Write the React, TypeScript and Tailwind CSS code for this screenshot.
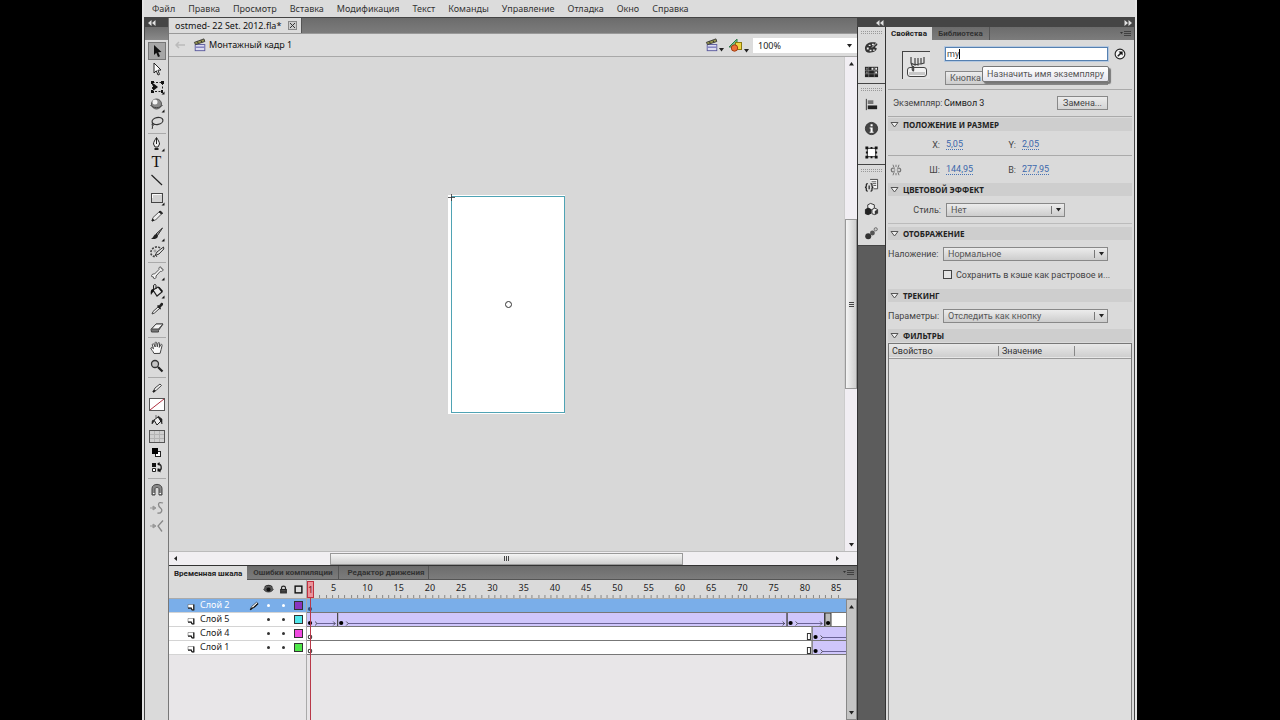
import { useState } from "react";
import type { ReactNode } from "react";
import clsx from "clsx";

const MENU = [
  "Файл",
  "Правка",
  "Просмотр",
  "Вставка",
  "Модификация",
  "Текст",
  "Команды",
  "Управление",
  "Отладка",
  "Окно",
  "Справка",
];

/* ---------- icons ---------- */

function Icon({ children, size = "size-4" }: { children: ReactNode; size?: string }) {
  return (
    <svg viewBox="0 0 16 16" className={clsx("block shrink-0", size)} fill="none" stroke="#222" aria-hidden="true">
      {children}
    </svg>
  );
}

// Small corner mark: the tool has a flyout menu.
const more = <path d="M15.5 12.5v3h-3z" fill="#111" stroke="none" />;

const ICONS: Record<string, ReactNode> = {
  arrow: <path d="M5 2v10l2.3-2.2L9 14l2-.8-1.8-4L12.500 9z" fill="#111" stroke="none" />,
  subselect: <path d="M5 2v10l2.300-2.200L9 14l1.500-.6-1.600-4.200L12 9z" fill="#fff" strokeWidth="1" />,
  transform: (
    <>
      <rect x="3.5" y="3.500" width="10" height="9" strokeDasharray="2 1.500" />
      <path d="M2 2h3v3H2zM12 2h3v3h-3zM2 11h3v3H2zM12 11h2v3h-2zM4 4v8l5-4z" fill="#111" stroke="none" />
      {more}
    </>
  ),
  sphere: (
    <>
      <circle cx="7.500" cy="7" r="5" fill="#8a8a8a" stroke="#555" />
      <circle cx="6" cy="5" r="2.500" fill="#f4f4f4" stroke="none" />
      <path d="M1.500 8c2 3.500 10 3.500 12 0" stroke="#444" />
      {more}
    </>
  ),
  lasso: (
    <>
      <ellipse cx="8.500" cy="6" rx="5.500" ry="3.500" transform="rotate(-12 8.500 6)" stroke="#333" strokeWidth="1.200" />
      <path d="M4 8c-2 1-.5 3 1 2S4 8 3.500 9.500 4 13 3 14" stroke="#333" />
    </>
  ),
  pen: (
    <>
      <path d="M7.500 1.500C6 4 4.500 6 4.500 8l1.500 3h3l1.500-3c0-2-1.500-4-3-6.500z" fill="#f2f2f2" />
      <path d="M7.500 2v6" />
      <path d="M5.500 12h4v2h-4z" fill="#222" stroke="none" />
      {more}
    </>
  ),
  line: <path d="M2.500 3 13 13" strokeWidth="1.200" />,
  rect: (
    <>
      <rect x="2.500" y="3.500" width="11" height="9" fill="#d2d2d2" stroke="#444" />
      <path d="M3.500 8V4.500h9" stroke="#fafafa" />
      {more}
    </>
  ),
  pencil: (
    <>
      <path d="m3 13 1-3.500L11 3l2.500 2L6.500 12z" fill="#eee" stroke="#555" />
      <path d="m3 13 .6-2 1.400 1.300zM10 4l1-1 2.500 2-1 1z" fill="#222" />
    </>
  ),
  brush: (
    <>
      <path d="M13.500 2 7 8l1.500 1.500z" fill="#999" stroke="#333" />
      <path d="M7.500 8C5 8 5 11 2 13c4 .5 7-.5 7-3.500z" fill="#222" stroke="none" />
      {more}
    </>
  ),
  deco: (
    <>
      <path d="M11 4c-3-2.500-8-.5-9 3.500s3 6 6 4.500" strokeDasharray="2 1.300" strokeWidth="1.600" stroke="#444" />
      <path d="M14.500 3 8 8l-2 3.500L10 10l4.800-5z" fill="#e4e4e4" stroke="#333" />
      <circle cx="6" cy="7" r="1" fill="#fff" stroke="#555" strokeWidth=".6" />
    </>
  ),
  bone: (
    <>
      <path
        d="M5.500 9 10 4.500c-.6-2 .8-3 2-2.400l.3 1.600 1.700.4c.4 1.600-1 2.700-2.700 2.200L7 11c.5 2-.8 3-2.200 2.500l-.5-1.600-1.600-.3C2 10 3.700 8.500 5.500 9z"
        fill="#f6f6f6"
        stroke="#555"
      />
      {more}
    </>
  ),
  bucket: (
    <>
      <path d="m4 7 5-3 4 5-5 4z" fill="#e6e6e6" strokeWidth="1.200" />
      <path d="M7 6V2.500C7 1 4.500 1 4.500 3v4" />
      <path d="M4.500 6C1.500 6 1.500 9 2 12c1-2 2-3 3-3.500zM9 4l4 5 1-1-3.500-4z" fill="#111" stroke="none" />
      {more}
    </>
  ),
  dropper: (
    <>
      <path d="m3 13 1-2.500 5-4.500 1.500 1.500-5 4.500z" fill="#eee" stroke="#444" />
      <path d="M8 5l1-1 1 .5 2-2.500c1.500-.5 2.500.5 2 2L11.500 6.500 12 8l-1 .5z" fill="#222" stroke="none" />
    </>
  ),
  eraser: (
    <>
      <path d="M2 10.500 7 5h7l-4.500 6.500v1.500H2.500z" fill="#777" stroke="#444" />
      <path d="M2.500 10 7 5h7L9.500 10z" fill="#f4f4f4" stroke="#444" />
    </>
  ),
  hand: (
    <path
      d="M5 13.500C4 11 2 9.500 1.800 8c.6-.9 1.700-.3 2.700.8L3.300 4.500c.3-1 1.400-1 1.800 0L6.200 7 6 2.800c.4-1 1.500-.9 1.700 0l.6 4 .8-3.800c.5-.8 1.500-.6 1.500.4l-.3 4 1.500-2.800c.7-.7 1.500 0 1.300.8-.8 3-1.100 5-2 8z"
      fill="#fafafa"
      stroke="#444"
    />
  ),
  zoom: (
    <>
      <circle cx="6" cy="6" r="3.500" fill="#c4c4c4" stroke="#333" strokeWidth="1.300" />
      <path d="m9 9 4.500 4.500" stroke="#222" strokeWidth="2.200" />
    </>
  ),
  stroke: (
    <>
      <path d="m4 12 2-4 5-4 1.500 1.500-5 4.500z" fill="#f4f4f4" stroke="#444" />
      <path d="m4 12 2-1.500" strokeWidth="2" />
    </>
  ),
  noStroke: (
    <>
      <rect x=".5" y="2.500" width="15" height="12" fill="#fff" stroke="#555" />
      <path d="M1 14 15 3" stroke="#b03040" />
    </>
  ),
  fill: (
    <>
      <path d="m5 8 4-3 3 4-4 4z" fill="#eee" />
      <path d="M7 6V3M4.500 8C3 8 3 10 3 12l2-2.500zM9 4l4 3v5l-1.500-3z" fill="#222" stroke="#222" strokeWidth=".6" />
    </>
  ),
  fillSwatch: (
    <>
      <rect x=".5" y="2.500" width="15" height="12" fill="#d0d0d0" stroke="#555" />
      <path d="M5.500 3v11M10.500 3v11M1 6.500h14M1 10.500h14" stroke="#b4b4b4" />
    </>
  ),
  blackWhite: (
    <>
      <rect x="6.500" y="7.500" width="5" height="5" fill="#fff" />
      <rect x="3" y="4" width="6" height="6" fill="#000" stroke="none" />
    </>
  ),
  swap: (
    <>
      <path d="M3 3h4v4H3z" fill="#111" stroke="none" />
      <path d="M3.500 8.500h3v3h-3z" fill="#fff" />
      <path d="M8.500 8.500h2v3h-2z" fill="#111" stroke="none" />
      <path d="M9 4c4-.5 4 6 1.500 6.500" strokeWidth="1.300" />
      <path d="m8 4 2.500-2v4zM9 10.500l2.500-2v4z" fill="#111" stroke="none" />
    </>
  ),
  magnet: (
    <>
      <path d="M3 13V6.500C3 1 13 1 13 6.500V13h-3V7c0-2-4-2-4 0v6z" fill="#888" stroke="#444" />
      <path d="M4 11.500h1.500M10.500 11.500h1.500" stroke="#fff" />
    </>
  ),
  smooth: (
    <>
      <path d="M14 3c-6-2-5 3-2.500 5s1 6-3 5" stroke="#888" strokeWidth="1.300" />
      <path d="M1 8h5M4 6l3 2-3 2z" stroke="#999" fill="#999" />
    </>
  ),
  straighten: (
    <>
      <path d="M14 2.500 9 8l4 5.500" stroke="#888" strokeWidth="1.300" />
      <path d="M1 8h4M4 6l3 2-3 2z" stroke="#999" fill="#999" />
    </>
  ),
  palette: (
    <>
      <path d="M1 9C1 4 6 2 11 2.500c4 .5 4 3 2 4-2 1-1.500 2 .5 2 .5 3-4 5-7.500 5C3 13.500 1 12 1 9z" fill="#333" stroke="none" />
      <path d="M3 8h2v2H3zM5 5h2v1.500H5zM8.500 4h2v1.500h-2zM6 10.500h2v1.500H6zM9.500 10h2v1.500h-2z" fill="#eee" stroke="none" />
      <path d="m14.500 2-6 6" stroke="#ddd" />
    </>
  ),
  swatches: (
    <>
      <rect x="1" y="3" width="14" height="11" fill="#222" stroke="none" />
      <path d="M2 4h2v2H2zM2 8h2v2H2z" fill="#777" stroke="none" />
      <path d="M8 4h2v2H8zM12 4h2v2h-2zM12 8h2v2h-2z" fill="#eee" stroke="none" />
      <path d="M5 3v11M1 7h14M1 10.500h14M11 3v11" stroke="#999" strokeWidth=".6" />
    </>
  ),
  align: (
    <>
      <path d="M2.500 2v12" stroke="#333" />
      <path d="M4 3.500h6v4H4z" fill="#777" stroke="none" />
      <path d="M4 9h10v4H4z" fill="#222" stroke="none" />
    </>
  ),
  info: (
    <>
      <circle cx="8" cy="8" r="6.500" fill="#444" stroke="#333" />
      <path d="M7 3.500h2.200v2H7zM6 7h3.200v4.500h1v1H6v-1h1V8H6z" fill="#fff" stroke="none" />
    </>
  ),
  transformPanel: (
    <>
      <rect x="3.500" y="3.500" width="9" height="9" fill="#fff" />
      <path d="M1.500 1.500h3v3h-3zM11.500 1.500h3v3h-3zM1.500 11.500h3v3h-3zM11.500 11.500h3v3h-3zM7 2h2v2H7zM7 12h2v2H7zM2 7h2v2H2zM12 7h2v2h-2z" fill="#111" stroke="none" />
    </>
  ),
  code: (
    <>
      <path d="M6.500 1.500h8v10H10" fill="#f4f4f4" stroke="#444" />
      <path d="M8 4h5M9 6h4M10 8h3" stroke="#555" />
      <path d="M4 6c-2 0-1.500 1.500-1.500 2.500S2 10 1 10c1 0 1.500.5 1.500 1.500S2 14 4 14M7 6c2 0 1.500 1.500 1.500 2.500S9 10 10 10c-1 0-1.500.5-1.500 1.500S9 14 7 14" strokeWidth="1.300" />
      <path d="M5.500 8v4" strokeWidth="1.300" />
    </>
  ),
  components: (
    <>
      <path d="m4 3 3-1.500L11 3v4L8 8.500 4 7z" fill="#eee" stroke="#333" />
      <path d="m1.500 8 3-1.500 3 1.500v4l-3 1.500-3-1z" fill="#222" />
      <path d="m8.500 8 3-1.500 3 1.500v4l-3 1.500-3-1z" fill="#f0f0f0" stroke="#333" />
      <path d="M11.500 9.500v3.500l3-1V8z" fill="#333" stroke="none" />
    </>
  ),
  motion: (
    <>
      <circle cx="4.500" cy="11" r="3.200" fill="#333" stroke="none" />
      <circle cx="9" cy="7.500" r="2.600" fill="#555" stroke="none" />
      <circle cx="12.500" cy="3.500" r="1.700" fill="#ccc" stroke="#666" />
    </>
  ),
  clapper: (
    <>
      <rect x="2.500" y="7.500" width="11" height="7" fill="#dcdcf0" stroke="#55559a" />
      <path d="M3 10.500h10" stroke="#7777bb" strokeWidth="1.500" />
      <path d="M1.500 5 12.500 1l1 3L3 7.500z" fill="#9a9a50" stroke="#333" />
      <path d="m5 4 1 2M9 2.800l1 2" />
    </>
  ),
  shapes: (
    <>
      <path d="M1 10 9 2v8z" fill="#6fc08a" stroke="#2e7a4a" />
      <rect x="7.500" y="5.500" width="6" height="7" fill="#f0d440" stroke="#8a7a10" />
      <circle cx="6.500" cy="11" r="3.200" fill="#ee7038" stroke="#a03c10" />
    </>
  ),
  layer: (
    <>
      <path d="M2 3h12v11h-5L9 10H2z" fill="#fff" stroke="#555" />
      <path d="M13.500 3v10.500H10M2 10h6.500l1.500 4" stroke="#222" strokeWidth="2.500" />
    </>
  ),
  eye: (
    <>
      <path d="M1 8c3-6 11-6 14 0-3 5-11 5-14 0z" fill="#555" stroke="#333" />
      <circle cx="8" cy="8" r="3" fill="#111" stroke="none" />
      <path d="M2 5c3-4 9-4 12 0" stroke="#333" strokeWidth="1.500" />
    </>
  ),
  lock: (
    <>
      <path d="M2 7h12v8H2z" fill="#222" stroke="none" />
      <path d="M4.500 7V5c0-4 7-4 7 0v2" strokeWidth="2" />
      <path d="M4 10h8M4 12.500h8" stroke="#777" />
    </>
  ),
  outline: <rect x="2" y="2" width="12" height="12" fill="#ddd" stroke="#111" strokeWidth="2.500" />,
  editing: (
    <>
      <path d="M2 14 4 9l8-7 2.500 2L7 11z" fill="#fff" stroke="#222" />
      <path d="m2 14 4-3.500M7 11l7.500-7" stroke="#111" strokeWidth="2" />
    </>
  ),
  go: (
    <>
      <circle cx="8" cy="8" r="6.500" fill="#f4f4f4" strokeWidth="1.500" />
      <path d="m5 11 4.500-4.500" strokeWidth="2" />
      <path d="M6 4.500h5.500V10z" fill="#111" stroke="none" />
    </>
  ),
  link: (
    <>
      <path d="M6.500 5.500H4c-3 0-3 5 0 5h2.500M9.500 5.500H12c3 0 3 5 0 5H9.500" stroke="#777" strokeWidth="1.800" />
      <path d="M5 8h2M9 8h2M8 1v3M8 12v3M4 1l1 3M12 1l-1 3M4 15l1-3M12 15l-1-3" stroke="#555" />
    </>
  ),
};

function Chevrons({ right = false }: { right?: boolean }) {
  return (
    <svg viewBox="0 0 8 6" className={clsx("h-1.5 w-2", right && "rotate-180")} fill="#e0e0e0" aria-hidden="true">
      <path d="M3.500 0v6L0 3zM7.500 0v6L4 3z" />
    </svg>
  );
}

function PanelMenu() {
  return (
    <button type="button" aria-label="Меню панели" className="ml-auto flex items-center px-0.5">
      <svg viewBox="0 0 12 8" className="h-2 w-3" stroke="#333" aria-hidden="true">
        <path d="M0 2h3L1.500 4z" fill="#333" strokeWidth="0" />
        <path d="M4 1.500h7M4 3.500h7M4 5.500h7" strokeWidth=".8" />
      </svg>
    </button>
  );
}

function Triangle({ dir }: { dir: "up" | "down" | "left" | "right" }) {
  const d = { up: "M0 4.500h5L2.500 1z", down: "M0 1h5L2.500 4.500z", left: "M4 0v5L1 2.500z", right: "M1 0v5l3-2.500z" }[dir];
  return (
    <svg viewBox="0 0 5 5" className="size-[5px] shrink-0" fill="#222" aria-hidden="true">
      <path d={d} />
    </svg>
  );
}

/* ---------- tools ---------- */

const TOOL_GROUPS: [string, string][][] = [
  [["arrow", "Выделение"], ["subselect", "Подвыделение"], ["transform", "Свободное преобразование"], ["sphere", "3D-поворот"], ["lasso", "Лассо"]],
  [["pen", "Перо"], ["text", "Текст"], ["line", "Линия"], ["rect", "Прямоугольник"], ["pencil", "Карандаш"], ["brush", "Кисть"], ["deco", "Декорирование"]],
  [["bone", "Кость"], ["bucket", "Заливка"], ["dropper", "Пипетка"], ["eraser", "Ластик"]],
  [["hand", "Рука"], ["zoom", "Масштаб"]],
];

const COLOR_TOOLS = [
  ["stroke", "Штрих"],
  ["noStroke", "Цвет обводки"],
  ["fill", "Заливка цветом"],
  ["fillSwatch", "Цвет заливки"],
  ["blackWhite", "Черно-белое"],
  ["swap", "Поменять цвета"],
];

const OPTION_TOOLS = [
  ["magnet", "Привязка"],
  ["smooth", "Сгладить"],
  ["straighten", "Выпрямить"],
];

function ToolButton({ id, label, active, onClick, short }: { id: string; label: string; active?: boolean; onClick?: () => void; short?: boolean }) {
  return (
    <button
      type="button"
      aria-label={label}
      onClick={onClick}
      className={clsx(
        "flex w-[18px] items-center justify-center border",
        short ? "h-4" : "h-[18px]",
        active ? "border-[#777] bg-[#a6a6a6]" : "border-transparent"
      )}
    >
      {id === "text" ? (
        <span className="font-['Liberation_Serif',serif] text-[16px] leading-4 text-[#111]">T</span>
      ) : (
        <Icon>{ICONS[id]}</Icon>
      )}
    </button>
  );
}

function Toolbox() {
  const [tool, setTool] = useState("arrow");
  return (
    <aside className="flex w-[24px] shrink-0 flex-col border-r border-[#777]">
      <div className="flex h-[9px] shrink-0 items-center bg-[#454545] pl-[3px]">
        <Chevrons />
      </div>
      <div className="h-[13px] shrink-0 bg-linear-to-b from-[#6e6e6e] to-[#8a8a8a]" />
      <div className="flex flex-1 flex-col items-center bg-[#dadada] pt-0.5">
        {TOOL_GROUPS.map((group, i) => (
          <div key={i} className="flex w-full flex-col items-center">
            {group.map(([id, label]) => (
              <ToolButton key={id} id={id} label={label} active={tool === id} onClick={() => setTool(id)} />
            ))}
            {i < 3 && <hr className="my-px w-[18px] border-[#aaa]" />}
          </div>
        ))}
        <hr className="my-0.5 w-[18px] border-[#aaa]" />
        {COLOR_TOOLS.map(([id, label]) => (
          <ToolButton key={id} id={id} label={label} short />
        ))}
        <hr className="my-0.5 w-[18px] border-[#aaa]" />
        {OPTION_TOOLS.map(([id, label]) => (
          <ToolButton key={id} id={id} label={label} />
        ))}
      </div>
    </aside>
  );
}

/* ---------- document ---------- */

function DocumentBar() {
  return (
    <>
      <div className="flex h-4 shrink-0 items-stretch border-b border-[#999] bg-linear-to-b from-[#6c6c6c] to-[#7c7c7c]">
        <div className="flex items-center gap-[7px] border-r border-[#555] bg-[#dcdcdc] pr-1 pl-1.5 text-[9px] leading-none text-[#111]">
          ostmed- 22 Set. 2012.fla*
          <button type="button" aria-label="Закрыть" className="flex size-[9px] items-center justify-center border border-[#888] bg-[#ccc]">
            <svg viewBox="0 0 7 7" className="size-[7px]" stroke="#333" aria-hidden="true">
              <path d="m1 1 5 5M6 1 1 6" />
            </svg>
          </button>
        </div>
      </div>
      <div className="flex h-[23px] shrink-0 items-center border-b border-[#a8a8a8] bg-[#dcdcdc] pl-1.5">
        <svg viewBox="0 0 10 8" className="h-2 w-2.5" stroke="#bbb" fill="none" strokeWidth="1.500" aria-hidden="true">
          <path d="M10 4H1M4 1 1 4l3 3" />
        </svg>
        <span className="ml-2">
          <Icon size="size-[14px]">{ICONS.clapper}</Icon>
        </span>
        <span className="ml-[2px] flex-1 text-[9px] text-[#111]">Монтажный кадр 1</span>
        <button type="button" aria-label="Изменить сцену" className="flex items-end">
          <Icon size="size-[14px]">{ICONS.clapper}</Icon>
          <Triangle dir="down" />
        </button>
        <button type="button" aria-label="Изменить символ" className="mx-[4px] flex items-end">
          <Icon size="size-4">{ICONS.shapes}</Icon>
          <Triangle dir="down" />
        </button>
        <div className="relative w-[104px]">
          <select aria-label="Масштаб" className="block h-[15px] w-full appearance-none bg-white pl-[5px] text-[9px] leading-[15px] text-[#222]">
            <option>100%</option>
          </select>
          <span className="pointer-events-none absolute top-[5px] right-[5px]">
            <Triangle dir="down" />
          </span>
        </div>
      </div>
    </>
  );
}

function Grip({ vertical }: { vertical?: boolean }) {
  return (
    <svg viewBox="0 0 7 5" className={clsx("h-[5px] w-[7px]", vertical && "rotate-90")} stroke="#444" aria-hidden="true">
      <path d="M1.500 0v5M3.500 0v5M5.500 0v5" />
    </svg>
  );
}

function Canvas() {
  return (
    <>
      <div className="flex min-h-0 flex-1">
        <div className="flex flex-1 items-center justify-center bg-[#d8d8d8]">
          <div className="h-[219px] w-[117px] bg-white py-px pl-[3px]">
            <div className="relative flex h-full items-center justify-center border border-[#4fa3b4]">
              <svg viewBox="0 0 7 7" className="absolute -top-[3px] -left-[4px] size-[7px]" stroke="#333" aria-hidden="true">
                <path d="M3.500 0v7M0 3.500h7" strokeWidth=".8" />
              </svg>
              <span className="size-[7px] rounded-full border border-[#333]" />
            </div>
          </div>
        </div>
        <div className="flex w-[13px] flex-col items-center justify-between border-l border-[#ccc] bg-[#f1eef3] py-1">
          <Triangle dir="up" />
          <div className="flex h-[35%] w-[12px] items-center justify-center border border-[#999] bg-linear-to-r from-[#f4f4f4] to-[#cfcfcf]">
            <Grip vertical />
          </div>
          <Triangle dir="down" />
        </div>
      </div>
      <div className="flex h-[14px] shrink-0 border-t border-[#bbb] bg-[#f1eff2] pr-[13px]">
        <div className="flex flex-1 items-center justify-between px-1">
          <Triangle dir="left" />
          <div className="flex h-[12px] w-[53%] items-center justify-center border border-[#999] bg-linear-to-b from-[#f4f4f4] to-[#cfcfcf]">
            <Grip />
          </div>
          <Triangle dir="right" />
        </div>
      </div>
    </>
  );
}

/* ---------- timeline ---------- */

const SPAN = 538; // width of the frame grid in drawing units
const STEP = 6.23;
const frameX = (n: number) => 3 + (n - 1) * STEP;

type Track = { name: string; color: string; keys: { at: number; empty?: boolean }[]; tweens: [number, number][]; selected?: boolean };

const TRACKS: Track[] = [
  { name: "Слой 2", color: "bg-[#8a34c0]", selected: true, keys: [{ at: 1 }], tweens: [] },
  { name: "Слой 5", color: "bg-[#4fe6ea]", keys: [{ at: 1 }, { at: 6 }, { at: 78 }, { at: 84 }], tweens: [[1, 6], [6, 78], [78, 84]] },
  { name: "Слой 4", color: "bg-[#f04ae0]", keys: [{ at: 1, empty: true }, { at: 82 }], tweens: [[82, 96]] },
  { name: "Слой 1", color: "bg-[#4fe84a]", keys: [{ at: 1, empty: true }, { at: 82 }], tweens: [[82, 96]] },
];

function Frames({ track }: { track: Track }) {
  return (
    <svg viewBox={`0 0 ${SPAN} 14`} preserveAspectRatio="none" className="block h-[14px] w-full" aria-hidden="true">
      <rect width={SPAN} height="14" fill={track.selected ? "#7aaee9" : "#fff"} />
      {track.tweens.map(([from, to]) => {
        const x1 = frameX(from) - 3;
        const x2 = frameX(to) - 3;
        return (
          <g key={from} stroke="#444" fill="none">
            <rect x={x1} y="0" width={x2 - x1} height="14" fill="#cfc6fb" stroke="none" />
            <path d={`M${x2 - 0.5} 0v14`} />
            {x1 > 10 && <path d={`M${x1 - 0.5} 0v14`} />}
            <path d={`M${x1 + 10} 10.500H${x2 - 3}`} stroke="#6a6296" />
            <path d={`M${x1 + 8} 8.500l2 2-2 2M${x2 - 5} 8.500l2 2-2 2`} stroke="#333" strokeWidth=".8" />
          </g>
        );
      })}
      {track.name === "Слой 5" && <path d="M517 0h6v14h-6z" fill="#bbb" stroke="#333" />}
      {track.keys.map((k) =>
        k.empty ? (
          <g key={k.at} fill="#fff" stroke="#333">
            <circle cx={frameX(k.at)} cy="10" r="1.800" />
            <rect x="499.500" y="6.500" width="3" height="6" />
          </g>
        ) : (
          <circle key={k.at} cx={frameX(k.at)} cy="10" r="2.100" fill={track.selected ? "#34507c" : "#000"} />
        )
      )}
      <path d={`M0 13.500H${SPAN}`} stroke="#777" />
    </svg>
  );
}

function LayerRow({ track }: { track: Track }) {
  const cell = "flex w-[15px] items-center justify-center";
  const dot = clsx("size-[3px] rounded-full", track.selected ? "bg-white" : "bg-[#333]");
  return (
    <li
      className={clsx(
        "flex h-[14px] items-stretch border-b border-[#d4d4d4] pl-[18px] text-[9px] leading-[12px]",
        track.selected ? "bg-[#7aaee9] text-white" : "bg-white text-[#222]"
      )}
    >
      <span className="mt-1">
        <Icon size="size-2">{ICONS.layer}</Icon>
      </span>
      <span className="ml-[5px] flex-1">{track.name}</span>
      <span className={cell}>{track.selected && <Icon size="size-[10px]">{ICONS.editing}</Icon>}</span>
      <span className={cell}>
        <span className={dot} />
      </span>
      <span className={cell}>
        <span className={dot} />
      </span>
      <span className={cell}>
        <span className={clsx("size-[9px] border border-[#333]", track.color)} />
      </span>
    </li>
  );
}

function Timeline() {
  const marks = Array.from({ length: 17 }, (_, i) => (i + 1) * 5);
  return (
    <section className="flex min-h-[155px] shrink-0 flex-col border-t border-[#333]">
      <div role="tablist" className="flex h-[14px] shrink-0 border-b border-[#555] bg-linear-to-b from-[#6c6c6c] to-[#7c7c7c] font-['Roboto',sans-serif] text-[8px] leading-[13px] font-bold">
        <button role="tab" aria-selected="true" className="h-[14px] bg-[#dcdcdc] px-[5px] text-[#222]">
          Временная шкала
        </button>
        <button role="tab" aria-selected="false" className="border-r border-[#555] px-[6px] text-[#333]">
          Ошибки компиляции
        </button>
        <button role="tab" aria-selected="false" className="border-r border-[#555] pr-1 pl-2 text-[#333]">
          Редактор движения
        </button>
        <PanelMenu />
      </div>
      <div className="flex flex-1 bg-[#e8e6e8]">
        <div className="flex w-[138px] shrink-0 flex-col border-r border-[#aaa]">
          <div className="flex h-[19px] items-center justify-end border-b border-[#aaa] bg-[#dadada]">
            {["eye", "lock", "outline"].map((id) => (
              <span key={id} className="flex w-[15px] justify-center">
                <Icon size={id === "eye" ? "size-[11px]" : "size-[9px]"}>{ICONS[id]}</Icon>
              </span>
            ))}
          </div>
          <ul>
            {TRACKS.map((t) => (
              <LayerRow key={t.name} track={t} />
            ))}
          </ul>
        </div>
        <div className="relative flex flex-1 flex-col">
          <div className="flex h-[19px] flex-col border-b border-[#aaa] bg-[#dadada]">
            <div className="flex flex-1 items-center pl-6 text-[9px] leading-none text-[#222]">
              {marks.map((m) => (
                <span key={m} className={m === 85 ? "w-[26px]" : "flex-1"}>
                  {m}
                </span>
              ))}
            </div>
            <div className="pr-[11px]">
              <svg viewBox={`0 0 ${SPAN} 3`} preserveAspectRatio="none" className="block h-[3px] w-full" stroke="#888" aria-hidden="true">
                <path d={Array.from({ length: 85 }, (_, i) => `M${Math.round((i + 1) * STEP) + 0.5} 0v3`).join("")} />
              </svg>
            </div>
          </div>
          <div className="flex flex-1">
            <div className="flex-1">
              {TRACKS.map((t) => (
                <Frames key={t.name} track={t} />
              ))}
            </div>
            <div className="flex w-[11px] flex-col items-center justify-between border border-[#888] bg-[#c4c4c4] py-1">
              <Triangle dir="up" />
              <Triangle dir="down" />
            </div>
          </div>
          {/* playhead */}
          <div className="absolute inset-y-0 left-0 flex w-[7px] flex-col items-center pt-px">
            <span className="h-[17px] w-[7px] border border-[#c03040] bg-[#f08088]/80 text-center text-[9px] leading-[15px] text-[#7a1018]">1</span>
            <span className="w-px flex-1 bg-[#b83848]" />
          </div>
        </div>
      </div>
    </section>
  );
}

/* ---------- right side ---------- */

const DOCK = [["palette", "swatches"], ["align", "info", "transformPanel"], ["code", "components", "motion"]];
const DOCK_LABELS: Record<string, string> = {
  palette: "Цвет",
  swatches: "Образцы",
  align: "Выровнять",
  info: "Информация",
  transformPanel: "Преобразование",
  code: "Фрагменты кода",
  components: "Компоненты",
  motion: "Шаблоны движения",
};

function Dock() {
  return (
    <nav className="w-[29px] shrink-0 border-x border-[#333] bg-[#5c5c5c]">
      {DOCK.map((group, i) => (
        <div key={i} className="flex flex-col items-center border-b border-[#444] bg-[#dadada] pt-[4px]">
          <span className="mb-px h-[3px] w-[21px] border-y border-dotted border-[#999]" />
          {group.map((id) => (
            <button key={id} type="button" aria-label={DOCK_LABELS[id]} className="flex h-6 w-full items-center justify-center">
              <Icon size="size-[15px]">{ICONS[id]}</Icon>
            </button>
          ))}
        </div>
      ))}
    </nav>
  );
}

function SectionTitle({ children }: { children: ReactNode }) {
  return (
    <h2 className="flex h-[13px] items-center gap-1 bg-[#cecece] pl-0.5 font-['Noto_Sans',sans-serif] text-[8px] leading-none font-bold text-[#222]">
      <svg viewBox="0 0 9 6" className="h-1.5 w-[9px]" fill="#eee" stroke="#555" aria-hidden="true">
        <path d="M1 .5h7L4.500 5z" />
      </svg>
      {children}
    </h2>
  );
}

function Select({ id, value, label, className }: { id: string; value: string; label?: string; className: string }) {
  return (
    <div className={clsx("relative", className)}>
      <select
        id={id}
        aria-label={label}
        className="block h-[14px] w-full appearance-none border border-[#888] bg-linear-to-b from-[#ececec] to-[#cdcdcd] pl-1 text-[9px] leading-3 text-[#555]"
      >
        <option>{value}</option>
      </select>
      <span className="pointer-events-none absolute top-[3px] right-[4px] flex h-2 items-center border-l border-[#777] pl-[4px]">
        <Triangle dir="down" />
      </span>
    </div>
  );
}

function NumberField({ name, value }: { name: string; value: string }) {
  return (
    <div className="flex w-[76px] items-center">
      <span className="w-[13px] text-right text-[#444]">{name}:</span>
      <button type="button" aria-label={`${name} ${value}`} className="ml-1.5 border-b border-dotted border-[#4a74b4] leading-[10px] text-[#3c68ac]">
        {value}
      </button>
    </div>
  );
}

function Properties() {
  const [name, setName] = useState("my");
  return (
    <section className="flex min-w-0 flex-1 flex-col bg-[#dadada] font-['Roboto',sans-serif] text-[9px] leading-3 text-[#444]">
      <div role="tablist" className="flex h-[13px] shrink-0 bg-linear-to-b from-[#6c6c6c] to-[#7c7c7c] text-[8px] leading-[13px] font-bold">
        <button role="tab" aria-selected="true" className="w-[46px] bg-[#dadada] text-[#222]">
          Свойства
        </button>
        <button role="tab" aria-selected="false" className="w-[58px] border-r border-[#555] text-[#333]">
          Библиотека
        </button>
        <PanelMenu />
      </div>
      <div className="flex flex-1 flex-col px-0.5">
        <div className="flex h-[50px] border-b border-[#aaa] pt-[7px]">
          <div className="mt-1 ml-[14px] flex size-7 items-center justify-center border-t border-l border-[#444] bg-[#e2e2e2]">
            <svg viewBox="0 0 24 24" className="size-6" fill="#f2f2f2" stroke="#444" aria-hidden="true">
              <rect x="2.500" y="13.500" width="19" height="9" rx="2.500" />
              <path d="M4 18h16v3H4z" fill="#c8c8c8" stroke="none" />
              <path d="M9 17c-2 0-2-2-1.500-4L6 9V3M6 9l4 2V4M10 10l3 1V4M13 10h3V4M16 10l3-1V3M8.500 17c.5-2 0-3 0-5" fill="none" strokeWidth="1.200" />
            </svg>
          </div>
          <div className="ml-[15px] flex-1">
            <div className="relative">
              <input
                aria-label="Имя экземпляра"
                value={name}
                onChange={(e) => setName(e.target.value)}
                className="block h-[14px] w-full border border-[#5580b0] bg-white pl-px text-[9px] leading-3 text-[#444] outline-1 outline-[#b4c8e0]"
              />
              {name === "my" && <span className="absolute top-[2px] left-[14px] h-[10px] w-px bg-black" />}
            </div>
            <div className="relative mt-[10px]">
              <Select id="kind" label="Тип экземпляра" value="Кнопка" className="w-full" />
              <div
                role="tooltip"
                className="absolute -top-[5px] -right-px rounded-[2px] border border-[#777] bg-linear-to-b from-white to-[#e6e6ee] px-[4px] text-[9px] leading-[14px] whitespace-nowrap text-[#555] shadow-[2px_2px_1px_#777]"
              >
                Назначить имя экземпляру
              </div>
            </div>
          </div>
          <button type="button" aria-label="Открыть" className="mr-[6px] ml-[6px] mt-px self-start">
            <Icon size="size-3">{ICONS.go}</Icon>
          </button>
        </div>
        <div className="flex h-[27px] items-center border-b border-[#aaa] pr-6 pl-[5px]">
          <span className="w-[51px]">Экземпляр:</span>
          <span className="flex-1 text-[#222]">Символ 3</span>
          <button type="button" className="h-[14px] w-[51px] border border-[#888] bg-linear-to-b from-[#ececec] to-[#d4d4d4] leading-3 text-[#444]">
            Замена...
          </button>
        </div>
        <div className="pt-px">
          <SectionTitle>ПОЛОЖЕНИЕ И РАЗМЕР</SectionTitle>
          <div className="flex h-[25px] items-center border-b border-[#aaa] pt-[3px] pl-[39px]">
            <NumberField name="X" value="5,05" />
            <NumberField name="Y" value="2,05" />
          </div>
          <div className="flex h-[27px] items-center pl-0.5">
            <Icon size="size-3">{ICONS.link}</Icon>
            <span className="w-[25px]" />
            <NumberField name="Ш" value="144,95" />
            <NumberField name="В" value="277,95" />
          </div>
          <SectionTitle>ЦВЕТОВОЙ ЭФФЕКТ</SectionTitle>
          <div className="mb-[3px] flex h-7 items-center border-b border-[#bbb]">
            <label htmlFor="style" className="w-[53px] text-right">
              Стиль:
            </label>
            <Select id="style" value="Нет" className="ml-[5px] w-[119px]" />
          </div>
          <SectionTitle>ОТОБРАЖЕНИЕ</SectionTitle>
          <div className="flex h-[27px] items-center pr-6">
            <label htmlFor="blend" className="w-[50px] text-right">
              Наложение:
            </label>
            <Select id="blend" value="Нормальное" className="ml-[5px] flex-1" />
          </div>
          <label className="mb-[7px] ml-[55px] flex h-[15px] items-center gap-1 whitespace-nowrap">
            <input type="checkbox" className="size-[9px] appearance-none border border-[#444] bg-[#e4e4e4] checked:bg-[#555]" />
            Сохранить в кэше как растровое и...
          </label>
          <SectionTitle>ТРЕКИНГ</SectionTitle>
          <div className="flex h-[27px] items-center pr-6">
            <label htmlFor="tracking" className="w-[50px] text-right">
              Параметры:
            </label>
            <Select id="tracking" value="Отследить как кнопку" className="ml-[5px] flex-1" />
          </div>
          <SectionTitle>ФИЛЬТРЫ</SectionTitle>
        </div>
        <div className="mt-px flex-1 border-x border-t border-[#777] bg-[#dedede]">
          <table className="w-full table-fixed text-left text-[#333]">
            <thead>
              <tr className="h-[14px] border-b border-[#999] bg-linear-to-b from-[#e8e8e8] to-[#cfcfcf]">
                <th className="w-[45%] py-0 pl-[3px] font-normal">Свойство</th>
                <th className="w-[32%] py-0 font-normal">
                  <span className="block border-x border-[#888] pl-[3px] leading-[10px]">Значение</span>
                </th>
                <th className="py-0" aria-label="Прочее" />
              </tr>
            </thead>
          </table>
        </div>
      </div>
    </section>
  );
}

export default function App() {
  return (
    <div className="flex min-h-screen bg-black pr-[143px] pl-[142px] font-['Noto_Sans',sans-serif]">
      <div className="flex min-w-0 flex-1 flex-col border-x-2 border-[#e4e4e4] bg-[#dcdcdc]">
        <nav className="flex h-[17px] shrink-0 items-center gap-[13px] pl-2 text-[9px] leading-none text-[#333]">
          {MENU.map((item) => (
            <button key={item} type="button">
              {item}
            </button>
          ))}
        </nav>
        <div className="flex flex-1 border-x border-t border-[#444]">
          <Toolbox />
          <main className="flex min-w-0 flex-1 flex-col">
            <DocumentBar />
            <Canvas />
            <Timeline />
          </main>
          <div className="flex w-[277px] shrink-0 flex-col">
            <div className="flex h-[9px] shrink-0 items-center justify-between bg-[#454545] pr-0.5 pl-[19px]">
              <Chevrons />
              <Chevrons right />
            </div>
            <div className="flex flex-1">
              <Dock />
              <Properties />
            </div>
          </div>
        </div>
      </div>
    </div>
  );
}
